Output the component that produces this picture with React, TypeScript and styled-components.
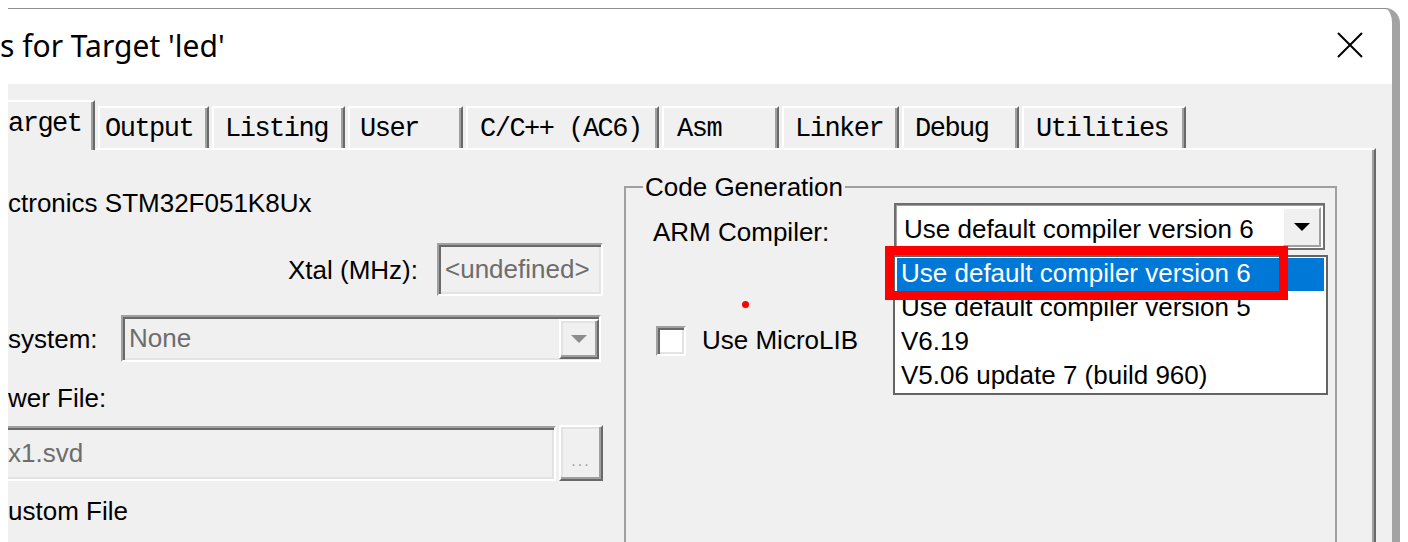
import React from 'react'
import styled, { createGlobalStyle } from 'styled-components'

const GlobalStyle = createGlobalStyle`
  html, body {
    margin: 0;
    padding: 0;
    background: #fff;
  }
  body {
    font-family: "Liberation Sans", Arial, sans-serif;
  }
`

const Screen = styled.div`
  width: 1408px;
  height: 542px;
  box-sizing: border-box;
  padding: 8px 0 0 8px;
  overflow: hidden;
  background: #fff;
  display: flex;
`

const Window = styled.div`
  width: 1392px;
  box-sizing: border-box;
  display: flex;
  flex-direction: column;
  background: #fff;
  border-top: 1px solid #8f8f8f;
  border-right: 8px solid #a3a3a3;
  border-top-right-radius: 15px;
`

const TitleBar = styled.div`
  height: 75px;
  flex-shrink: 0;
  display: flex;
  align-items: center;
  justify-content: space-between;
`

const TitleText = styled.div`
  margin-left: -8px;
  margin-top: -3px;
  font-family: "Noto Sans", "Open Sans", sans-serif;
  font-size: 30px;
  color: #000;
  white-space: nowrap;
`

const CloseButton = styled.div`
  width: 26px;
  height: 26px;
  margin-right: 29px;
  margin-top: -4px;
  display: flex;
`

const Body = styled.div`
  flex: 1;
  min-height: 0;
  display: flex;
  flex-direction: column;
  overflow: hidden;
  background: #f0f0f0;
  font-family: "Liberation Sans", Arial, sans-serif;
  font-size: 26px;
  color: #000;
`

const TabStrip = styled.div`
  height: 64px;
  flex-shrink: 0;
  display: flex;
  align-items: flex-end;
  gap: 3px;
  position: relative;
  z-index: 1;
`

const Tab = styled.div<{ $w: number; $pad: number; $active?: boolean }>`
  box-sizing: border-box;
  flex-shrink: 0;
  width: ${p => p.$w}px;
  height: ${p => (p.$active ? 50 : 42)}px;
  margin-bottom: ${p => (p.$active ? -2 : 0)}px;
  padding-left: ${p => p.$pad}px;
  padding-top: ${p => (p.$active ? 7 : 6)}px;
  background: #f0f0f0;
  border-top: 2px solid #fff;
  border-left: 2px solid #fff;
  border-right: 2px solid #696969;
  box-shadow: inset -2px 0 0 #a0a0a0;
  font-family: "Liberation Mono", "DejaVu Sans Mono", monospace;
  font-size: 27px;
  letter-spacing: -1.5px;
  line-height: 30px;
  white-space: nowrap;

  &:first-child {
    margin-left: -23px;
  }
`

const Panel = styled.div`
  flex: 1;
  width: 1368px;
  box-sizing: border-box;
  display: flex;
  align-items: flex-start;
  border-top: 2px solid #fff;
  border-right: 2px solid #696969;
  box-shadow: inset -2px 0 0 #a0a0a0;
`

const LeftColumn = styled.div`
  width: 595px;
  flex-shrink: 0;
  display: flex;
  flex-direction: column;
  overflow: hidden;
`

const Label = styled.div<{ $top: number }>`
  margin-top: ${p => p.$top}px;
  line-height: 30px;
  white-space: nowrap;
`

const Row = styled.div<{ $top: number; $h: number; $end?: boolean }>`
  margin-top: ${p => p.$top}px;
  height: ${p => p.$h}px;
  display: flex;
  align-items: center;
  justify-content: ${p => (p.$end ? 'flex-end' : 'flex-start')};
`

const RowLabel = styled.div<{ $w?: number }>`
  width: ${p => (p.$w ? `${p.$w}px` : 'auto')};
  margin-right: ${p => (p.$w ? 0 : 19)}px;
  flex-shrink: 0;
  line-height: 30px;
  white-space: nowrap;
`

const Sunken = styled.div<{ $w: number; $h: number; $shift?: number }>`
  box-sizing: border-box;
  flex-shrink: 0;
  width: ${p => p.$w}px;
  height: ${p => p.$h}px;
  margin-left: ${p => p.$shift ?? 0}px;
  display: flex;
  align-items: center;
  padding-left: 6px;
  background: #f0f0f0;
  color: #6d6d6d;
  border: 2px solid;
  border-color: #a0a0a0 #fff #fff #a0a0a0;
  box-shadow: inset 2px 2px 0 #696969, inset -2px -2px 0 #e3e3e3;
  white-space: nowrap;
`

const Raised = styled.div<{ $w: number; $h: number }>`
  box-sizing: border-box;
  flex-shrink: 0;
  width: ${p => p.$w}px;
  height: ${p => p.$h}px;
  background: #f0f0f0;
  border: 2px solid;
  border-color: #fff #696969 #696969 #fff;
  box-shadow: inset -2px -2px 0 #a0a0a0, inset 2px 2px 0 #e3e3e3;
  display: flex;
  align-items: center;
  justify-content: center;
`

const DropButton = styled(Raised)`
  margin-left: auto;
`

const Arrow = styled.div<{ $color: string }>`
  width: 0;
  height: 0;
  border-left: 8px solid transparent;
  border-right: 8px solid transparent;
  border-top: 8px solid ${p => p.$color};
`

const Ellipsis = styled(Raised)`
  margin-left: 3px;
  align-items: flex-end;
  padding-bottom: 10px;
  font-size: 16px;
  line-height: 16px;
  letter-spacing: 2px;
  color: #a0a0a0;
`

const GroupBox = styled.fieldset`
  margin: 22px 0 0 21px;
  padding: 0;
  width: 713px;
  height: 500px;
  box-sizing: border-box;
  flex-shrink: 0;
  border: 2px solid #a0a0a0;
`

const Legend = styled.legend`
  margin-left: 17px;
  padding: 0 2px;
  line-height: 30px;
`

const CompilerRow = styled.div`
  margin-top: 1px;
  padding-left: 27px;
  display: flex;
  align-items: flex-start;
`

const CompilerLabel = styled.div`
  width: 241px;
  margin-top: 14px;
  line-height: 30px;
  white-space: nowrap;
`

const Combo = styled.div`
  position: relative;
  box-sizing: border-box;
  width: 431px;
  height: 47px;
  background: #fff;
  border: 2px solid #6e6e6e;
  box-shadow: inset 1px 1px 0 #a0a0a0;
  display: flex;
  align-items: center;
  padding: 0 2px 0 8px;
  white-space: nowrap;
`

const ComboText = styled.span`
  flex: 1;
  margin-top: 6px;
`

const ComboButton = styled.div`
  box-sizing: border-box;
  width: 39px;
  height: 40px;
  background: #f0f0f0;
  border: 2px solid;
  border-color: #fff #a0a0a0 #a0a0a0 #fff;
  display: flex;
  align-items: center;
  justify-content: center;
`

const DropList = styled.div`
  position: absolute;
  left: -3px;
  top: 50px;
  width: 435px;
  box-sizing: border-box;
  background: #fff;
  border: 2px solid #646464;
  z-index: 2;
`

const ListItem = styled.div<{ $selected?: boolean }>`
  height: 33px;
  line-height: 31px;
  margin: 0 2px;
  padding-left: 4px;
  white-space: nowrap;
  background: ${p => (p.$selected ? '#0078d7' : 'transparent')};
  color: ${p => (p.$selected ? '#fff' : '#000')};
  border-top: 1px solid ${p => (p.$selected ? '#fff' : 'transparent')};
`

const Highlight = styled.div`
  position: absolute;
  left: -11px;
  top: 41px;
  width: 403px;
  height: 54px;
  box-sizing: border-box;
  border: 9px solid #ff0000;
  z-index: 3;
`

const CheckRow = styled.div`
  position: relative;
  margin-top: 75px;
  padding-left: 30px;
  display: flex;
  align-items: center;
  gap: 16px;
`

const CheckBox = styled.div`
  box-sizing: border-box;
  width: 30px;
  height: 30px;
  background: #fff;
  border: 2px solid;
  border-color: #a0a0a0 #fff #fff #a0a0a0;
  box-shadow: inset 2px 2px 0 #696969, inset -2px -2px 0 #e3e3e3;
`

const Dot = styled.div`
  position: absolute;
  left: 116px;
  top: -24px;
  width: 7px;
  height: 7px;
  border-radius: 50%;
  background: #ff0000;
`

const tabs = [
  { label: 'arget', w: 110, pad: 21, active: true },
  { label: 'Output', w: 111, pad: 5 },
  { label: 'Listing', w: 133, pad: 11 },
  { label: 'User', w: 115, pad: 10 },
  { label: 'C/C++ (AC6)', w: 193, pad: 12 },
  { label: 'Asm', w: 117, pad: 13 },
  { label: 'Linker', w: 117, pad: 11 },
  { label: 'Debug', w: 117, pad: 11 },
  { label: 'Utilities', w: 164, pad: 12 },
]

const compilers = [
  'Use default compiler version 6',
  'Use default compiler version 5',
  'V6.19',
  'V5.06 update 7 (build 960)',
]

export default function App() {
  return (
    <>
      <GlobalStyle />
      <Screen>
        <Window>
          <TitleBar>
            <TitleText>s for Target 'led'</TitleText>
            <CloseButton>
              <svg width="26" height="26" viewBox="0 0 26 26">
                <path d="M1 1 L25 25 M25 1 L1 25" stroke="#000" strokeWidth="2" fill="none" />
              </svg>
            </CloseButton>
          </TitleBar>
          <Body>
            <TabStrip>
              {tabs.map(t => (
                <Tab key={t.label} $w={t.w} $pad={t.pad} $active={t.active}>
                  {t.label}
                </Tab>
              ))}
            </TabStrip>
            <Panel>
              <LeftColumn>
                <Label $top={38}>ctronics STM32F051K8Ux</Label>
                <Row $top={25} $h={53} $end>
                  <RowLabel>Xtal (MHz):</RowLabel>
                  <Sunken $w={166} $h={53}>&lt;undefined&gt;</Sunken>
                </Row>
                <Row $top={19} $h={47}>
                  <RowLabel $w={113}>system:</RowLabel>
                  <Sunken $w={480} $h={47}>
                    None
                    <DropButton $w={40} $h={40}>
                      <Arrow $color="#8c8c8c" />
                    </DropButton>
                  </Sunken>
                </Row>
                <Label $top={21}>wer File:</Label>
                <Row $top={12} $h={56}>
                  <Sunken $w={556} $h={55} $shift={-8}>
                    x1.svd
                  </Sunken>
                  <Ellipsis $w={44} $h={56}>...</Ellipsis>
                </Row>
                <Label $top={15}>ustom File</Label>
              </LeftColumn>
              <GroupBox>
                <Legend>Code Generation</Legend>
                <CompilerRow>
                  <CompilerLabel>ARM Compiler:</CompilerLabel>
                  <Combo>
                    <ComboText>{compilers[0]}</ComboText>
                    <ComboButton>
                      <Arrow $color="#000" />
                    </ComboButton>
                    <DropList>
                      {compilers.map((c, i) => (
                        <ListItem key={c} $selected={i === 0}>
                          {c}
                        </ListItem>
                      ))}
                    </DropList>
                    <Highlight />
                  </Combo>
                </CompilerRow>
                <CheckRow>
                  <Dot />
                  <CheckBox />
                  <span>Use MicroLIB</span>
                </CheckRow>
              </GroupBox>
            </Panel>
          </Body>
        </Window>
      </Screen>
    </>
  )
}
